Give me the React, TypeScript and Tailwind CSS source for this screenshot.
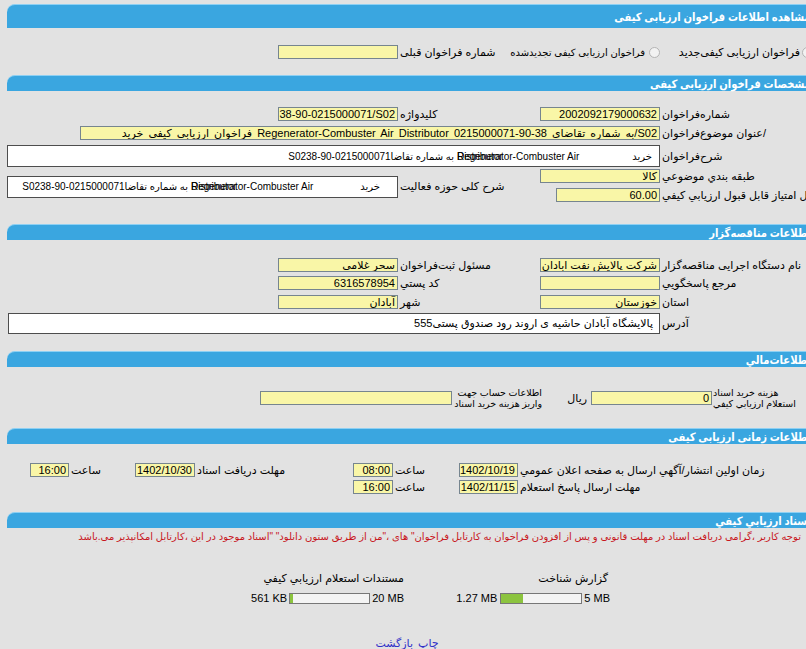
import React from 'react';

const fieldBase =
  'h-[14px] shrink-0 overflow-hidden whitespace-nowrap border border-[#76858f] bg-[#f9f6a7] px-[2px] text-[11px] leading-[12px]';

function Field({ w, children }: { w: string; children?: React.ReactNode }) {
  return <div className={`${fieldBase} ${w}`}>{children}</div>;
}

function Label({ w, children }: { w: string; children: React.ReactNode }) {
  return (
    <div className={`flex shrink-0 justify-end whitespace-nowrap pl-[2px] ${w}`}>
      <span className="shrink-0">{children}</span>
    </div>
  );
}

function Bar({ title, className }: { title: string; className: string }) {
  return (
    <div
      className={`ml-[7px] flex rounded-tl-[8px] border-t border-[#8ed0f3] bg-[#3aa6e0] pr-[5px] text-[11.5px] font-bold text-white ${className}`}
    >
      <span className="inline-block origin-right scale-x-[0.87] whitespace-nowrap">{title}</span>
    </div>
  );
}

function Radio() {
  return <div className="h-[11px] w-[11px] shrink-0 rounded-full border border-[#b4b4b4] bg-[#f2f2f2]" />;
}

function Progress({ w, fill }: { w: string; fill: string }) {
  return (
    <div dir="ltr" className={`h-[11px] shrink-0 border border-[#777] bg-[#f4f4f4] ${w}`}>
      <div className={`h-full bg-[#8cc43f] ${fill}`} />
    </div>
  );
}

// white multi-word box used by the two description rows
function DescBox({ w, pad, gap }: { w: string; pad: string; gap: string }) {
  return (
    <div
      className={`flex h-[22px] shrink-0 items-center overflow-hidden whitespace-nowrap border border-[#4d4d4d] bg-white text-[10px] ${w} ${pad}`}
    >
      <span>خريد</span>
      <span dir="ltr" className={`relative ${gap}`}>
        Regenerator-Combuster Air
        <span className="absolute left-0 top-0">Distributor</span>
      </span>
      <span className="mr-[3px]">به شماره تقاضا</span>
      <span dir="ltr">S0238-90-0215000071</span>
    </div>
  );
}

export default function App() {
  return (
    <div className="h-[649px] w-[806px] overflow-hidden bg-[#e2e2e2] font-['Liberation_Sans','DejaVu_Sans',sans-serif] text-[11px] text-black">
      <div dir="rtl" className="w-[816px] pt-[4px]">
        <Bar title="مشاهده اطلاعات فراخوان ارزيابی کيفی" className="h-[24px] items-center leading-[24px]" />

        {/* radio row */}
        <div className="mt-[17px] flex h-[14px] items-center">
          <div className="flex w-[156px] shrink-0 items-center whitespace-nowrap pr-[3px]">
            <Radio />
            <span className="mr-[2px]">فراخوان ارزيابی کيفی‌جديد</span>
          </div>
          <div className="flex w-[120px] shrink-0 items-center whitespace-nowrap">
            <Radio />
            <span className="mr-[4px] text-[10px]">فراخوان ارزيابی کيفی تجديدشده</span>
          </div>
          <Label w="w-[142px]">شماره فراخوان قبلی</Label>
          <Field w="w-[120px]" />
        </div>

        <Bar title="مشخصات فراخوان ارزيابی کيفی" className="mt-[16px] h-[16px] items-end leading-[14px]" />

        <div className="mt-[16px] flex h-[14px] items-center">
          <Label w="w-[156px]">شماره‌فراخوان</Label>
          <Field w="w-[120px]">2002092179000632</Field>
          <Label w="w-[142px]">کليدواژه</Label>
          <Field w="w-[120px]">
            <span dir="ltr">38-90-0215000071/S02</span>
          </Field>
        </div>

        <div className="mt-[5px] flex h-[14px] items-center">
          <Label w="w-[156px]">/عنوان موضوع‌فراخوان</Label>
          <Field w="w-[580px]">
            <span className="[word-spacing:2px]">
              S02/به شماره تقاضاى 38-90-0215000071 Regenerator-Combuster Air Distributor فراخوان ارزيابي کيفي خريد
            </span>
          </Field>
        </div>

        <div className="mt-[5px] flex h-[22px] items-center">
          <Label w="w-[156px]">شرح‌فراخوان</Label>
          <DescBox w="w-[653px]" pad="pr-[7px]" gap="mr-[53px]" />
        </div>

        <div className="mt-[2px] flex">
          <div className="flex flex-col">
            <div className="flex h-[14px] items-center">
              <Label w="w-[156px]">طبقه بندي موضوعي</Label>
              <Field w="w-[120px]">کالا</Field>
            </div>
            <div className="mt-[5px] flex h-[14px] items-center">
              <Label w="w-[156px]">حداقل امتياز قابل قبول ارزيابي کيفي</Label>
              <Field w="w-[104px]">60.00</Field>
            </div>
          </div>
          <div className="flex items-center pt-[2px]">
            <Label w="w-[142px]">شرح کلی حوزه فعاليت</Label>
            <DescBox w="w-[391px]" pad="pr-[17px]" gap="mr-[47px]" />
          </div>
        </div>

        <Bar title="اطلاعات مناقصه‌گزار" className="mt-[22px] h-[16px] items-end leading-[14px]" />

        <div className="mt-[18px] flex h-[14px] items-center">
          <Label w="w-[156px]">نام دستگاه اجرايی مناقصه‌گزار</Label>
          <Field w="w-[120px]">شرکت پالايش نفت ابادان</Field>
          <Label w="w-[142px]">مسئول ثبت‌فراخوان</Label>
          <Field w="w-[120px]">سحر غلامی</Field>
        </div>
        <div className="mt-[4px] flex h-[14px] items-center">
          <Label w="w-[156px]">مرجع پاسخگويي</Label>
          <Field w="w-[120px]" />
          <Label w="w-[142px]">کد پستي</Label>
          <Field w="w-[120px]">6316578954</Field>
        </div>
        <div className="mt-[5px] flex h-[14px] items-center">
          <Label w="w-[156px]">استان</Label>
          <Field w="w-[120px]">خوزستان</Field>
          <Label w="w-[142px]">شهر</Label>
          <Field w="w-[120px]">آبادان</Field>
        </div>
        <div className="mt-[4px] flex h-[21px] items-center">
          <Label w="w-[156px]">آدرس</Label>
          <div className="flex h-[21px] w-[652px] shrink-0 items-center whitespace-nowrap border border-[#4d4d4d] bg-white pr-[6px]">
            پالايشگاه آبادان حاشيه ی اروند رود صندوق پستی555
          </div>
        </div>

        <Bar title="اطلاعات‌مالي" className="mt-[17px] h-[16px] items-end leading-[14px]" />

        <div className="mt-[20px] flex h-[22px] items-center text-[9.5px]">
          <div className="flex w-[104px] shrink-0 justify-end whitespace-nowrap pl-[1px]">
            <div className="shrink-0 text-left leading-[11px]">
              <div>هزينه خريد اسناد</div>
              <div>استعلام ارزيابي کيفي</div>
            </div>
          </div>
          <Field w="w-[121px]">0</Field>
          <div className="w-[49px] shrink-0 pr-[4px] text-[11px]">ريال</div>
          <div className="w-[90px] shrink-0 whitespace-nowrap leading-[11px]">
            <div>اطلاعات حساب جهت</div>
            <div>واريز هزينه خريد اسناد</div>
          </div>
          <Field w="w-[192px]" />
        </div>

        <Bar title="اطلاعات زمانی ارزيابی کيفی" className="mt-[19px] h-[16px] items-end leading-[14px]" />

        <div className="mt-[19px] flex h-[14px] items-center">
          <Label w="w-[298px]">زمان اولين انتشار/آگهي ارسال به صفحه اعلان عمومي</Label>
          <Field w="w-[59px]">1402/10/19</Field>
          <Label w="w-[66px]">ساعت</Label>
          <Field w="w-[40px]">08:00</Field>
          <Label w="w-[158px]">مهلت دريافت اسناد</Label>
          <Field w="w-[60px]">1402/10/30</Field>
          <Label w="w-[66px]">ساعت</Label>
          <Field w="w-[39px]">16:00</Field>
        </div>
        <div className="mt-[3px] flex h-[14px] items-center">
          <Label w="w-[298px]">مهلت ارسال پاسخ استعلام</Label>
          <Field w="w-[59px]">1402/11/15</Field>
          <Label w="w-[66px]">ساعت</Label>
          <Field w="w-[40px]">16:00</Field>
        </div>

        <Bar title="اسناد ارزيابي کيفي" className="mt-[18px] h-[16px] items-end leading-[14px]" />

        <div className="mt-[3px] h-[12px] whitespace-nowrap pr-[15px] text-[10px] leading-[12px] text-[#c8161d]">
          توجه کاربر ،گرامی دریافت اسناد در مهلت قانونی و پس از افزودن فراخوان به کارتابل فراخوان" های ،"من از طریق ستون دانلود" "اسناد موجود در این ،کارتابل امکانپذیر می.باشد
        </div>

        <div className="mt-[29px] flex pr-[206px]">
          <div className="flex w-[206px] shrink-0 flex-col">
            <div className="h-[12px] pr-[2px] leading-[12px]">گزارش شناخت</div>
            <div className="mt-[8px] flex h-[12px] items-center whitespace-nowrap">
              <span dir="ltr">5 MB</span>
              <div className="mr-[2px]">
                <Progress w="w-[82px]" fill="w-[22px]" />
              </div>
              <span dir="ltr" className="mr-[3px]">1.27 MB</span>
            </div>
          </div>
          <div className="flex flex-col">
            <div className="h-[12px] whitespace-nowrap leading-[12px]">مستندات استعلام ارزيابي کيفي</div>
            <div className="mt-[8px] flex h-[12px] items-center whitespace-nowrap">
              <span dir="ltr">20 MB</span>
              <div className="mr-[2px]">
                <Progress w="w-[81px]" fill="w-[3px]" />
              </div>
              <span dir="ltr" className="mr-[2px]">561 KB</span>
            </div>
          </div>
        </div>

        <div className="mt-[31px] flex justify-center gap-[5px] pr-[2px] text-[#3030c8]">
          <a className="cursor-pointer">چاپ</a>
          <a className="cursor-pointer">بازگشت</a>
        </div>
      </div>
    </div>
  );
}
